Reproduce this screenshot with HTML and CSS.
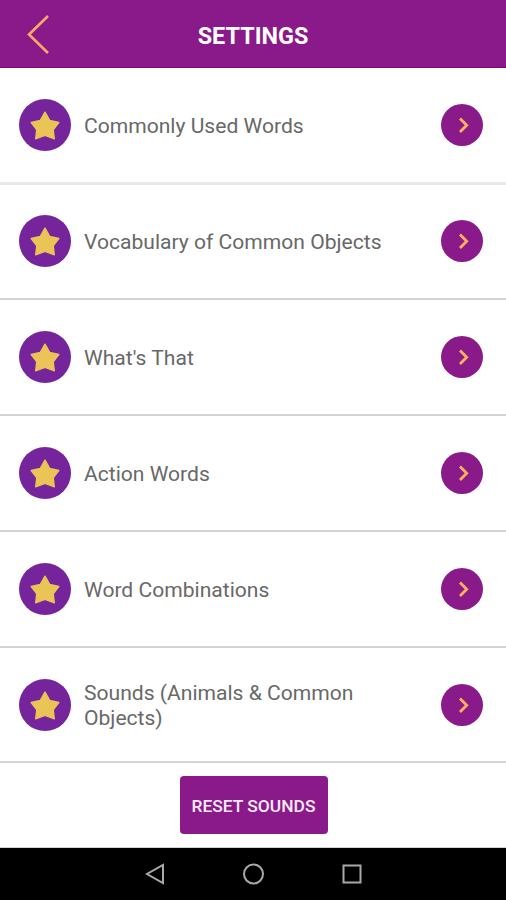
FILE: index.html
```html
<!DOCTYPE html>
<html lang="en"><head><meta charset="utf-8"><title>Settings</title><link rel="stylesheet" href="styles.css"></head>
<body>
<svg class="defs" width="0" height="0"><defs>
<symbol id="star" viewBox="0 0 52 52"><circle cx="26" cy="26" r="26" fill="#76249b"/><path d="M26 13.200l4.800 8.300 9 2-5.600 7.200 1.100 9.100-9.300-3.500-9.300 3.500 1.100-9.100-5.600-7.200 9-2z" fill="#ebc457" stroke="#ebc457" stroke-width="1.400" stroke-linejoin="round"/></symbol>
<symbol id="go" viewBox="0 0 42 42"><circle cx="21" cy="21" r="21" fill="#8a1a89"/><path d="M19 14.500l6.700 6.800-6.700 6.800" fill="none" stroke="#f8b25c" stroke-width="2.800"/></symbol>
</defs></svg>
<header class="header"><svg class="back" viewBox="0 0 24 40"><path d="M21 2L2 20.500l19 18.500" fill="none" stroke="#f8ab62" stroke-width="2.600"/></svg><h1 class="title">SETTINGS</h1></header>
<main class="list">
<div class="row"><svg class="star"><use href="#star"/></svg><span class="label">Commonly Used Words</span><svg class="go"><use href="#go"/></svg></div>
<div class="row"><svg class="star"><use href="#star"/></svg><span class="label">Vocabulary of Common Objects</span><svg class="go"><use href="#go"/></svg></div>
<div class="row"><svg class="star"><use href="#star"/></svg><span class="label">What's That</span><svg class="go"><use href="#go"/></svg></div>
<div class="row"><svg class="star"><use href="#star"/></svg><span class="label">Action Words</span><svg class="go"><use href="#go"/></svg></div>
<div class="row"><svg class="star"><use href="#star"/></svg><span class="label">Word Combinations</span><svg class="go"><use href="#go"/></svg></div>
<div class="row"><svg class="star"><use href="#star"/></svg><span class="label">Sounds (Animals &amp; Common Objects)</span><svg class="go"><use href="#go"/></svg></div>
</main>
<div class="actions"><button class="reset">RESET SOUNDS</button></div>
<nav class="nav"><svg viewBox="0 0 506 52" fill="none" stroke="#a9a9a9" stroke-width="2"><path d="M163 17v18l-16-9z"/><circle cx="253.500" cy="26" r="9.500"/><rect x="343.500" y="17.500" width="17" height="17"/></svg></nav>
</body></html>
```
FILE: styles.css
```css
* { box-sizing: border-box; }
body { margin: 0; width: 506px; height: 900px; display: flex; flex-direction: column; background: #fff; font-family: Roboto, sans-serif; overflow: hidden; }
.defs { display: none; }
.header { height: 68px; flex: none; display: grid; grid-template-columns: 76px 1fr 76px; align-items: center; background: #8a1a89; border-bottom: 1px solid #7d087c; }
.back { width: 24px; height: 40px; margin-left: 27px; }
.title { margin: 4px 0 0; text-align: center; font-size: 23.4px; font-weight: 700; color: #fff; }
.list { flex: none; }
.row { height: 116px; display: flex; align-items: center; padding: 0 23px 0 19px; border-bottom: 2px solid #d3d3d3; }
.row:first-child { height: 117px; border-bottom: 3px solid #e9e9e9; }
.row:nth-child(2) { height: 115px; padding-bottom: 2px; }
.row:last-child { height: 115px; }
.star { width: 52px; height: 52px; flex: none; }
.label { width: 310px; margin-left: 13px; font-size: 21.08px; line-height: 25px; color: #686868; padding-top: 1px; }
.go { width: 42px; height: 42px; flex: none; margin-left: auto; }
.actions { flex: 1; display: flex; justify-content: center; align-items: flex-start; padding: 13px 0 0 1px; border-bottom: 1px solid #d3d3d3; }
.reset { width: 148px; height: 58px; padding: 2px 0 0; border: 0; border-radius: 4px; background: #8a1a89; color: #f8eaf8; font: 500 17.4px Roboto, sans-serif; }
.nav { height: 52px; flex: none; background: #000; }
.nav svg { display: block; width: 506px; height: 52px; }
```
